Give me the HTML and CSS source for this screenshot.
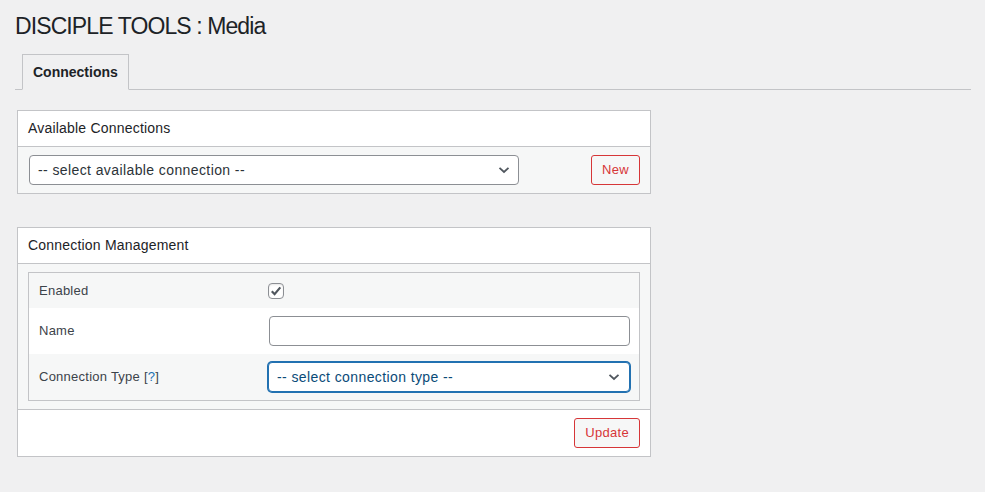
FILE: index.html
```html
<!DOCTYPE html>
<html lang="en">
<head>
<meta charset="utf-8">
<title>DISCIPLE TOOLS : Media</title>
<link rel="stylesheet" href="styles.css">
</head>
<body>
<div class="wrap">
  <h1 class="page-title">DISCIPLE TOOLS : Media</h1>
  <nav class="tabs">
    <a class="tab active" href="#">Connections</a>
  </nav>

  <section class="panel panel-first">
    <div class="panel-head">Available Connections</div>
    <div class="panel-row">
      <span class="select-wrap select-wide">
        <select class="select">
          <option>-- select available connection --</option>
        </select>
        <svg class="chevron" width="12" height="8" viewBox="0 0 12 8"><path d="M1.5 1.8 L6 6 L10.5 1.8" fill="none" stroke="#50575e" stroke-width="1.8"/></svg>
      </span>
      <button class="btn-danger">New</button>
    </div>
  </section>

  <section class="panel panel-second">
    <div class="panel-head">Connection Management</div>
    <div class="panel-body">
      <div class="form-table">
        <div class="form-row row-alt row-short">
          <div class="form-label">Enabled</div>
          <div class="form-value">
            <span class="checkbox"><svg width="14" height="14" viewBox="0 0 14 14"><path d="M2.8 7.2 L5.6 10.2 L11.3 3.4" fill="none" stroke="#50575e" stroke-width="2.2"/></svg></span>
          </div>
        </div>
        <div class="form-row">
          <div class="form-label">Name</div>
          <div class="form-value"><input class="text-input" type="text"></div>
        </div>
        <div class="form-row row-alt">
          <div class="form-label">Connection Type <span class="help">[<a href="#">?</a>]</span></div>
          <div class="form-value">
            <span class="select-wrap select-full">
              <select class="select select-focus">
                <option>-- select connection type --</option>
              </select>
              <svg class="chevron chevron-focus" width="12" height="8" viewBox="0 0 12 8"><path d="M1.5 1.8 L6 6 L10.5 1.8" fill="none" stroke="#50575e" stroke-width="1.8"/></svg>
            </span>
          </div>
        </div>
      </div>
    </div>
    <div class="panel-foot">
      <button class="btn-danger">Update</button>
    </div>
  </section>
</div>
</body>
</html>
```

FILE: styles.css
```css
html, body {
  margin: 0;
  padding: 0;
  background: #f0f0f1;
}
body {
  font-family: "Liberation Sans", Arial, sans-serif;
  color: #3c434a;
  font-size: 13px;
}
.wrap {
  padding: 12px 14px 0 15px;
}
.page-title {
  margin: 0;
  font-size: 23px;
  font-weight: 400;
  line-height: 1.3;
  color: #1d2327;
  letter-spacing: -0.9px;
}
.tabs {
  margin-top: 12px;
  display: flex;
  border-bottom: 1px solid #c3c4c7;
}
.tab {
  margin-left: 7px;
  margin-bottom: -1px;
  padding: 5px 10px;
  border: 1px solid #c3c4c7;
  border-bottom-color: #f0f0f1;
  background: #f0f0f1;
  font-size: 14px;
  line-height: 24px;
  font-weight: 700;
  color: #1d2327;
  text-decoration: none;
}
.panel {
  width: 634px;
  box-sizing: border-box;
  border: 1px solid #c3c4c7;
  background: #fff;
  margin-left: 2px;
}
.panel-first {
  margin-top: 20px;
}
.panel-second {
  margin-top: 33px;
}
.panel-head {
  height: 35px;
  display: flex;
  align-items: center;
  padding: 0 10px;
  border-bottom: 1px solid #c3c4c7;
  font-size: 14px;
  letter-spacing: 0.2px;
  color: #1d2327;
}
.panel-row {
  background: #f6f7f7;
  display: flex;
  justify-content: space-between;
  align-items: center;
  padding: 8px 10px 8px 11px;
}
.select-wrap {
  position: relative;
  display: block;
}
.select-wide {
  width: 490px;
}
.select-full {
  width: 362px;
}
.select {
  -webkit-appearance: none;
  appearance: none;
  width: 100%;
  height: 30px;
  box-sizing: border-box;
  border: 1px solid #8c8f94;
  border-radius: 4px;
  background: #fff;
  padding: 0 24px 0 8px;
  font-family: "Liberation Sans", Arial, sans-serif;
  font-size: 14px;
  letter-spacing: 0.4px;
  color: #2c3338;
  margin: 0;
  display: block;
}
.select-focus {
  border-color: #2271b1;
  box-shadow: 0 0 0 1px #2271b1;
  color: #0a4b78;
}
.chevron {
  position: absolute;
  right: 9px;
  top: 11px;
  pointer-events: none;
}
.chevron-focus {
  right: 10px;
}
.btn-danger {
  height: 30px;
  box-sizing: border-box;
  padding: 0 10px;
  border: 1px solid #d63638;
  border-radius: 3px;
  background: #f6f7f7;
  color: #d63638;
  font-family: "Liberation Sans", Arial, sans-serif;
  font-size: 13px;
  letter-spacing: 0.3px;
  cursor: pointer;
}
.panel-body {
  background: #f6f7f7;
  padding: 8px 10px;
  border-bottom: 1px solid #c3c4c7;
}
.form-table {
  border: 1px solid #c3c4c7;
  background: #fff;
}
.form-row {
  display: grid;
  grid-template-columns: 229px 1fr;
  align-items: center;
  height: 46px;
  padding: 0 10px 0 10px;
}
.row-alt {
  background: #f6f7f7;
}
.row-short {
  height: 35px;
}
.form-label {
  font-size: 13px;
  letter-spacing: 0.25px;
  color: #3c434a;
}
.help a {
  color: #2271b1;
  text-decoration: none;
}
.form-value {
  display: flex;
  align-items: center;
}
.checkbox {
  width: 16px;
  height: 16px;
  box-sizing: border-box;
  border: 1px solid #8c8f94;
  border-radius: 4px;
  background: #fff;
  box-shadow: inset 0 1px 2px rgba(0,0,0,0.1);
  display: flex;
  align-items: center;
  justify-content: center;
  margin-top: 2px;
}
.text-input {
  width: 361px;
  height: 30px;
  box-sizing: border-box;
  border: 1px solid #8c8f94;
  border-radius: 4px;
  background: #fff;
  margin: 0 0 0 1px;
  padding: 0 8px;
  font-family: "Liberation Sans", Arial, sans-serif;
  font-size: 14px;
}
.panel-foot {
  display: flex;
  justify-content: flex-end;
  padding: 8px 10px;
}
```
